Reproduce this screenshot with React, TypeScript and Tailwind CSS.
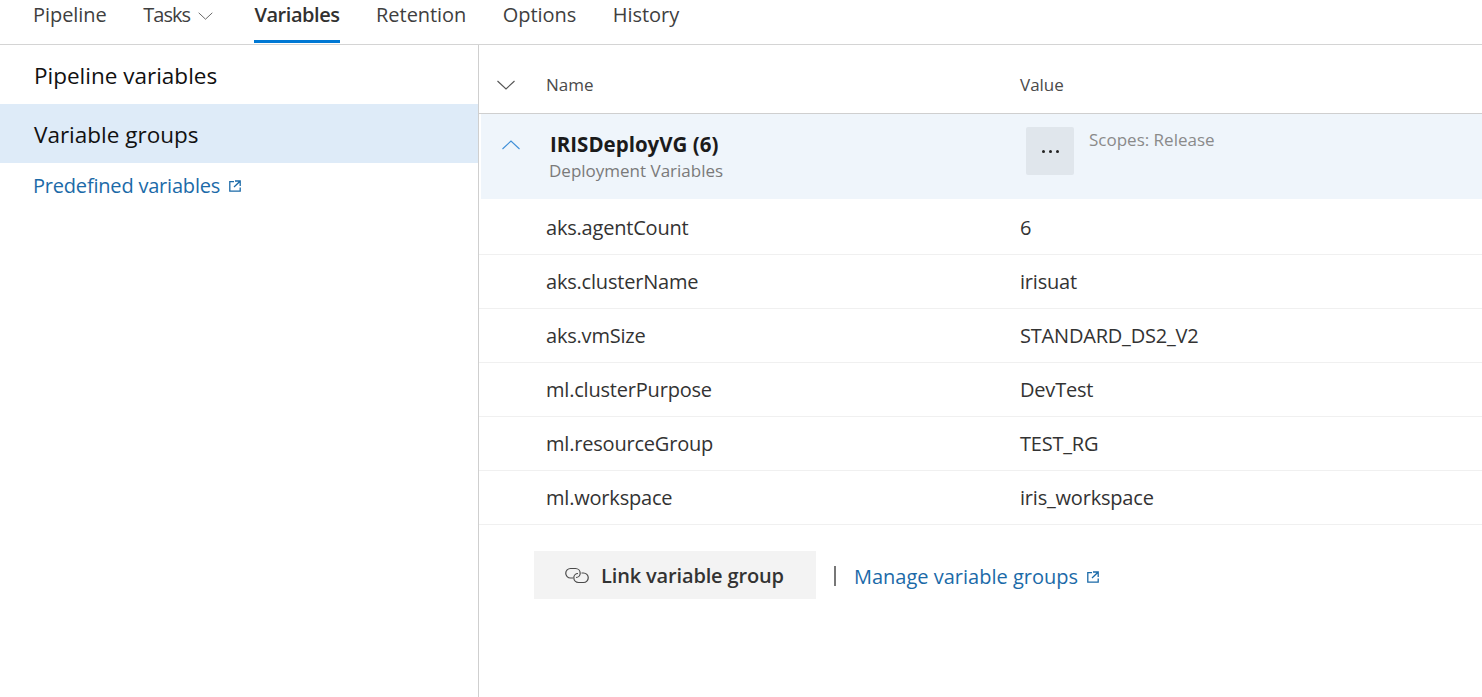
import React from 'react';

const font = "font-['Open_Sans','Noto_Sans',sans-serif]";

const tabs = ['Pipeline', 'Tasks', 'Variables', 'Retention', 'Options', 'History'];

const rows = [
  ['aks.agentCount', '6'],
  ['aks.clusterName', 'irisuat'],
  ['aks.vmSize', 'STANDARD_DS2_V2'],
  ['ml.clusterPurpose', 'DevTest'],
  ['ml.resourceGroup', 'TEST_RG'],
  ['ml.workspace', 'iris_workspace'],
];

const Chevron = ({ up, className }: { up?: boolean; className: string }) => (
  <svg viewBox="0 0 18 10" fill="none" stroke="currentColor" strokeWidth="1.1" className={className}>
    <path d={up ? 'M0.5 9 L9 1 L17.5 9' : 'M0.5 1 L9 9 L17.5 1'} />
  </svg>
);

const ExternalLink = () => (
  <svg viewBox="0 0 12 12" fill="none" stroke="currentColor" strokeWidth="1.3" className="w-[12px] h-[12px] shrink-0">
    <path d="M5 1.6 H0.8 V11.2 H11.2 V7.4" />
    <path d="M6 1 H11.2 V6 M11 1.2 L5 7" />
  </svg>
);

const LinkIcon = () => (
  <svg viewBox="0 0 24 17" fill="none" stroke="currentColor" strokeWidth="1.2" className="w-[24px] h-[17px] text-[#4a4a4a]">
    <path d="M8 11 H5.5 A4.75 4.75 0 0 1 5.5 1.5 H10.5 A4.75 4.75 0 0 1 15.2 6.2 C15.2 8.5 13.5 10.5 11 10.5" />
    <path d="M16.5 6 H18.5 A4.75 4.75 0 0 1 18.5 15.5 H13.5 A4.75 4.75 0 0 1 8.8 10.8 C8.8 8.5 10.5 6.5 13 6.5" />
  </svg>
);

export default function App() {
  return (
    <div className={`${font} w-[1482px] h-[697px] bg-white overflow-hidden flex flex-col`}>
      <div className="h-[45px] shrink-0 border-b border-[#d4d4d4] flex pl-[33px] gap-[36.5px]">
        {tabs.map((t) => (
          <div
            key={t}
            className={`h-[43px] pt-[1px] flex items-start text-[20px] leading-[28px] border-b-[3px] ${
              t === 'Variables'
                ? 'border-[#0078d4] font-semibold tracking-[-0.45px] text-[#323130]'
                : t === 'Tasks'
                  ? 'border-transparent tracking-[-1px] text-[#3f3f3f]'
                  : 'border-transparent tracking-[-0.05px] text-[#3f3f3f]'
            }`}
          >
            {t}
            {t === 'Tasks' && <Chevron className="w-[15px] h-[8px] ml-[8px] mr-[5px] mt-[11px] text-[#555555]" />}
          </div>
        ))}
      </div>

      <div className="flex flex-1 min-h-0">
        <div className="w-[479px] shrink-0 border-r border-[#cfcfcf]">
          <div className="h-[59px] pl-[34px] pt-[2px] flex items-center text-[22.5px] text-[#111111]">
            Pipeline variables
          </div>
          <div className="h-[59px] pl-[34px] pt-[2px] flex items-center text-[22.5px] text-[#111111] bg-[#deebf8]">
            Variable groups
          </div>
          <div className="h-[46px] pl-[33px] flex items-center gap-[9px] text-[20px] tracking-[-0.2px] text-[#1b6aa8]">
            Predefined variables
            <ExternalLink />
          </div>
        </div>

        <div className="flex-1 min-w-0">
          <div className="h-[69px] border-b border-[#cfcfcf] flex items-center text-[#4a4a4a] text-[17px]">
            <div className="w-[67px] pl-[18px] pt-[12px]">
              <Chevron className="w-[18px] h-[10px] text-[#555555]" />
            </div>
            <div className="w-[474px] pt-[12px]">Name</div>
            <div className="pt-[12px]">Value</div>
          </div>

          <div className="ml-[2px] h-[85px] bg-[#eff5fb] flex">
            <div className="w-[65px] pl-[21px] pt-[26px]">
              <Chevron up className="w-[18px] h-[10px] text-[#3f8fd8]" />
            </div>
            <div className="w-[480px]">
              <div className="mt-[16px] ml-[4px] text-[20.5px] leading-[28px] font-bold text-[#1b1b1b]">
                IRISDeployVG (6)
              </div>
              <div className="mt-[1px] ml-[3px] text-[17px] leading-[24px] text-[#7a7a7a]">
                Deployment Variables
              </div>
            </div>
            <div className="mt-[13px] w-[48px] h-[48px] rounded-[2px] bg-[#e0e6ec] flex items-center justify-center gap-[4px]">
              <span className="w-[3px] h-[3px] rounded-full bg-[#222222]" />
              <span className="w-[3px] h-[3px] rounded-full bg-[#222222]" />
              <span className="w-[3px] h-[3px] rounded-full bg-[#222222]" />
            </div>
            <div className="ml-[15px] mt-[14px] text-[17px] leading-[24px] text-[#8a8a8a]">
              Scopes: Release
            </div>
          </div>

          <div>
            {rows.map(([name, value]) => (
              <div key={name} className="h-[54px] first:h-[56px] first:pt-[2px] pt-[1px] border-b border-[#f0f0f0] flex items-center text-[20px] tracking-[-0.2px] text-[#333333]">
                <div className="w-[474px] ml-[67px]">{name}</div>
                <div>{value}</div>
              </div>
            ))}
          </div>

          <div className="mt-[26px] ml-[55px] flex items-center">
            <div className="w-[282px] h-[48px] pt-[1px] bg-[#f3f3f3] flex items-center pl-[31px] gap-[12px] text-[20px] font-semibold tracking-[-0.15px] text-[#333333]">
              <LinkIcon />
              Link variable group
            </div>
            <div className="ml-[18px] mt-[2px] w-[2px] h-[20px] bg-[#777777]" />
            <div className="ml-[18px] mt-[3px] flex items-center gap-[9px] text-[20px] text-[#1b6aa8]">
              Manage variable groups
              <ExternalLink />
            </div>
          </div>
        </div>
      </div>
    </div>
  );
}
